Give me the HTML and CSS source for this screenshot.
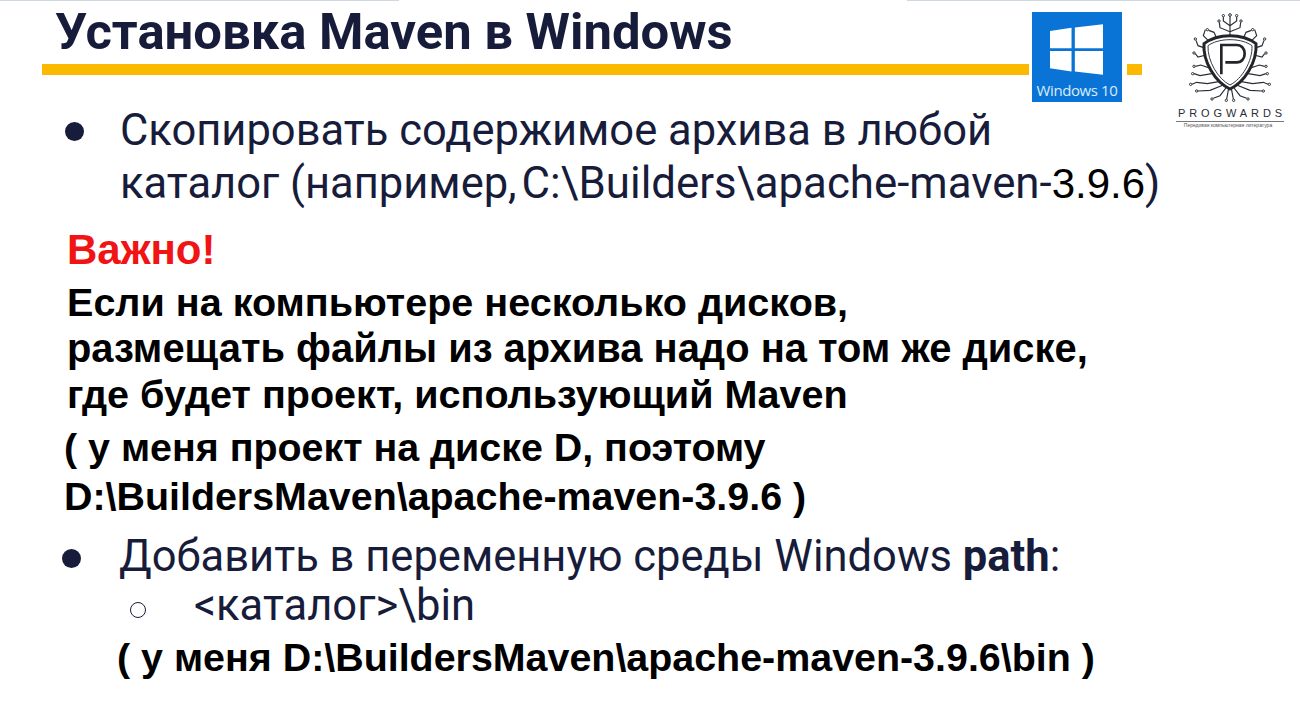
FILE: index.html
```html
<!DOCTYPE html>
<html lang="ru">
<head>
  <meta charset="UTF-8">
  <title>Установка Maven в Windows</title>
  <link rel="stylesheet" href="styles.css">
</head>
<body>

<div class="slide">
  <div class="top-line">
    <div class="top-left"></div>
    <div class="top-right"></div>
  </div>

  <div class="header">
    <h1 class="title">Установка Maven в Windows</h1>
    <div class="title-bar"></div>
  </div>

  <!-- windows 10 badge -->
  <div class="win-badge">
    <svg class="win-logo" viewBox="0 0 160 153">
      <path d="M0 21 L65 11 V73 H0 Z M75 10 L160 0 V73 H75 Z M0 81 H65 V143 L0 133 Z M75 81 H160 V153 L75 143 Z" fill="#fff"/>
    </svg>
    <div class="win-text">Windows 10</div>
  </div>

  <!-- progwards logo, coordinates are 3x zoom of the crop -->
  <div class="pw-logo">
    <svg class="pw-mark" viewBox="0 0 360 300">
      <g fill="none" stroke="#2b2d34" stroke-width="3.500">
        <path d="M180 34 V98 M180 62 L160 48 L160 36 M180 62 L200 48 L200 36 M180 80 L150 68 L148 52 M180 80 L210 68 L212 52"/>
        <path d="M140 100 L132 82 L116 76 M220 100 L228 82 L244 76 M118 110 L100 92 L106 74 M242 110 L260 92 L254 74"/>
        <path d="M108 130 L84 122 L78 106 M252 130 L276 122 L282 106 M108 150 L84 156 L76 146 M252 150 L276 156 L284 146"/>
        <path d="M122 190 L92 180 L76 184 M238 190 L268 180 L284 184 M130 205 L90 212 L72 206 M230 205 L270 212 L288 206"/>
        <path d="M146 230 L112 236 L80 232 L66 238 M214 230 L248 236 L280 232 L294 238 M160 240 L120 256 L84 258 M200 240 L240 256 L276 258"/>
        <path d="M170 246 L150 272 L130 280 M190 246 L210 272 L230 280 M176 250 L170 282 M184 250 L190 282"/>
      </g>
      <g fill="none" stroke="#2b2d34" stroke-width="3">
        <circle cx="180" cy="30" r="4"/><circle cx="160" cy="32" r="3.500"/><circle cx="200" cy="32" r="3.500"/>
        <circle cx="147" cy="48" r="3.500"/><circle cx="213" cy="48" r="3.500"/><circle cx="112" cy="74" r="3.500"/><circle cx="248" cy="74" r="3.500"/>
        <circle cx="76" cy="102" r="3.500"/><circle cx="284" cy="102" r="3.500"/><circle cx="72" cy="144" r="3.500"/><circle cx="288" cy="144" r="3.500"/>
        <circle cx="72" cy="184" r="3.500"/><circle cx="288" cy="184" r="3.500"/><circle cx="68" cy="206" r="3.500"/><circle cx="292" cy="206" r="3.500"/>
        <circle cx="62" cy="238" r="3.500"/><circle cx="298" cy="238" r="3.500"/><circle cx="80" cy="258" r="3.500"/><circle cx="280" cy="258" r="3.500"/>
        <circle cx="126" cy="282" r="3.500"/><circle cx="234" cy="282" r="3.500"/><circle cx="169" cy="286" r="3.500"/><circle cx="191" cy="286" r="3.500"/>
      </g>
      <path d="M180 92 C215 92 240 102 258 116 C262 170 224 232 180 252 C136 232 98 170 102 116 C120 102 145 92 180 92 Z" fill="#fff" stroke="#23252b" stroke-width="9"/>
      <path d="M180 104 C210 104 232 112 246 122 C248 168 216 222 180 240 C144 222 112 168 114 122 C128 112 150 104 180 104 Z" fill="none" stroke="#3a3c43" stroke-width="3"/>
      <path d="M154 208 V120 H200 C232 120 232 172 200 172 H166" fill="none" stroke="#23252b" stroke-width="8"/>
    </svg>
    <div class="pw-name">PROGWARDS</div>
    <div class="pw-rule"></div>
    <div class="pw-small">Передовая компьютерная литература</div>
  </div>

  <ul class="list first">
    <li>Скопировать содержимое архива в любой<br>каталог (например, <span class="path">C:\Builders\apache-maven-<span class="ver">3.9.6</span>)</span></li>
  </ul>

  <div class="note">
    <div class="important">Важно!</div>
    <div class="note-text">
      <div class="narrow">Если на компьютере несколько дисков,</div>
      <div>размещать файлы из архива надо на том же диске,</div>
      <div class="narrow">где будет проект, использующий Maven</div>
    </div>
    <div class="my-path">( у меня проект на диске D, поэтому<br>D:\BuildersMaven\apache-maven-3.9.6 )</div>
  </div>

  <ul class="list second">
    <li>Добавить в переменную среды Windows <b>path</b>:
      <ul class="sub">
        <li>&lt;каталог&gt;\bin</li>
      </ul>
    </li>
  </ul>

  <div class="my-bin">( у меня D:\BuildersMaven\apache-maven-3.9.6\bin )</div>
</div>

</body>
</html>
```
FILE: styles.css
```css
html, body {
  margin: 0;
  background: #fff;
}

.slide {
  position: relative;
  width: 1300px;
  height: 715px;
  overflow: hidden;
  background: #fff;
  font-family: Roboto, sans-serif;
  color: #171c3a;
}

.top-line {
  height: 1px;
  display: flex;
  justify-content: space-between;
}

.top-left {
  width: 399px;
  background: #cfd8e0;
}

.top-right {
  width: 393px;
  background: #cfd8e0;
}

.header {
  padding: 3px 0 0 42px;
}

.title {
  margin: 0 0 0 13px;
  font-size: 50.800px;
  line-height: 56px;
  font-weight: 700;
}

.title-bar {
  width: 1100px;
  height: 11px;
  margin-top: 4px;
  background: #fbb900;
}

.win-badge {
  position: absolute;
  left: 1032px;
  top: 12px;
  width: 90px;
  height: 90px;
  background: #0a74d6;
  box-shadow: 1px 0 0 4px #fff;
  display: flex;
  flex-direction: column;
  align-items: center;
}

.win-logo {
  width: 53px;
  height: 51px;
  margin-top: 12px;
  margin-right: 1px;
  filter: blur(0.3px);
}

.win-text {
  margin-top: 5px;
  font-family: "Open Sans", sans-serif;
  font-size: 15px;
  line-height: 20px;
  color: #d8ecfb;
  white-space: nowrap;
  letter-spacing: -0.4px;
}

.pw-logo {
  position: absolute;
  left: 1170px;
  top: 5px;
  width: 120px;
  display: flex;
  flex-direction: column;
  align-items: center;
}

.pw-mark {
  width: 120px;
  height: 100px;
  filter: blur(0.4px);
}

.pw-name {
  font-family: "Liberation Sans", sans-serif;
  font-size: 11px;
  line-height: 11px;
  letter-spacing: 3.900px;
  margin-right: -4px;
  color: #2b2d34;
  white-space: nowrap;
  margin-top: 3px;
}

.pw-rule {
  width: 108px;
  height: 1px;
  background: #777;
  margin-top: 2px;
}

.pw-small {
  font-family: "Liberation Sans", sans-serif;
  font-size: 5px;
  line-height: 7px;
  color: #555;
  white-space: nowrap;
  margin-right: 4px;
}

.list {
  list-style: none;
  margin: 0;
  padding: 0;
  font-size: 43.500px;
  line-height: 53px;
}

.list > li {
  position: relative;
}

.list > li::before {
  content: "";
  position: absolute;
  width: 19px;
  height: 19px;
  border-radius: 50%;
  background: #171c3a;
}

.first {
  margin-top: 29px;
  padding-left: 120px;
}

.first > li::before {
  left: -55px;
  top: 18px;
}

.second {
  margin-top: 9px;
  padding-left: 119px;
}

.second > li::before {
  left: -57px;
  top: 19px;
}

.ver {
  font-family: "Liberation Sans", sans-serif;
  font-size: 42px;
  color: #000;
}

.path {
  margin-left: -6px;
  font-size: 43.800px;
}

.sub {
  list-style: none;
  margin: 0;
  padding-left: 75px;
  line-height: 45px;
}

.sub li {
  position: relative;
}

.sub li::before {
  content: "";
  position: absolute;
  left: -64px;
  top: 19px;
  width: 16px;
  height: 16px;
  box-sizing: border-box;
  border: 1.500px solid #171c3a;
  border-radius: 50%;
}

.note {
  padding-left: 67px;
  margin-top: 15px;
  font-family: "Liberation Sans", sans-serif;
  font-weight: 700;
  color: #000;
}

.important {
  color: #f01414;
  font-size: 42px;
  line-height: 50px;
}

.note-text {
  margin-top: 4px;
  font-size: 39.900px;
  line-height: 46px;
}

.narrow {
  font-size: 39.550px;
}

.my-path {
  margin: 6px 0 0 -3px;
  font-size: 39.400px;
  line-height: 49px;
}

.my-bin {
  margin: 6px 0 0 117px;
  font-family: "Liberation Sans", sans-serif;
  font-weight: 700;
  color: #000;
  font-size: 39.400px;
  line-height: 46px;
}
```
